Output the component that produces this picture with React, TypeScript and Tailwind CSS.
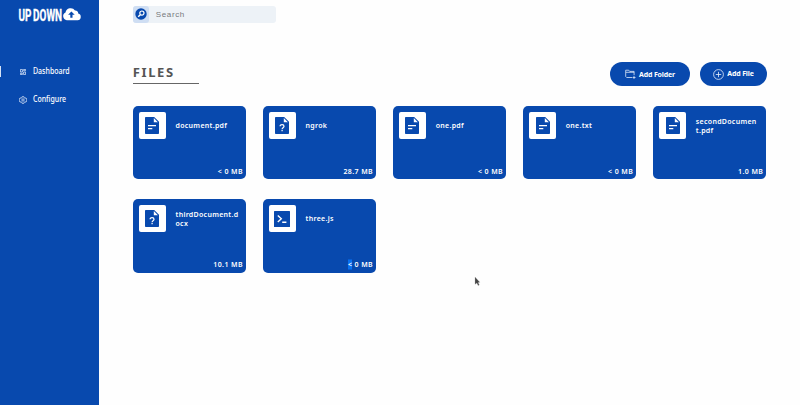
import React from 'react';

type Kind = 'text' | 'unknown' | 'code';
type FileItem = { name: string; size: string; kind: Kind; marked?: boolean };

const files: FileItem[] = [
  { name: 'document.pdf', size: '< 0 MB', kind: 'text' },
  { name: 'ngrok', size: '28.7 MB', kind: 'unknown' },
  { name: 'one.pdf', size: '< 0 MB', kind: 'text' },
  { name: 'one.txt', size: '< 0 MB', kind: 'text' },
  { name: 'secondDocument.pdf', size: '1.0 MB', kind: 'text' },
  { name: 'thirdDocument.docx', size: '10.1 MB', kind: 'unknown' },
  { name: 'three.js', size: '< 0 MB', kind: 'code', marked: true },
];

function Logo() {
  return (
    <svg className="block h-[28px] w-[66px]" viewBox="0 0 66 28">
      <text
        x="1"
        y="20.800"
        transform="scale(0.58 1)"
        textLength="75"
        lengthAdjust="spacingAndGlyphs"
        fill="#fff"
        stroke="#fff"
        strokeWidth="0.350"
        fontSize="16.800"
        wordSpacing="-1.500"
        className="font-['Roboto',sans-serif] font-bold"
      >
        UP DOWN
      </text>
      <path fill="#fff" d="M48.700 20.200a4 4 0 0 1-1.200-7.600A5.200 5.200 0 0 1 57 10.600a2.800 2.800 0 0 1 3.200 3A3.350 3.350 0 0 1 59.600 20.200z" />
      <path fill="#0849ae" d="M53.400 11.400l3.300 3.400h-2.200v3h-2.200v-3h-2.200z" />
    </svg>
  );
}

function FileIcon({ kind }: { kind: Kind }) {
  if (kind === 'code') {
    return (
      <svg className="block h-[16px] w-[16px]" viewBox="0 0 16 16">
        <rect width="16" height="16" rx="0.5" fill="#0849ae" />
        <path d="M3.800 4.500L7.300 7.800 3.800 11M8.200 11.300h4.200" fill="none" stroke="#fff" strokeWidth="1.400" />
      </svg>
    );
  }
  return (
    <svg className="block h-[17px] w-[14px]" viewBox="0 0 14 17">
      <path fill="#0849ae" d="M.8 0h8.400L14 4.800v11.400a.8.800 0 0 1-.8.800H.8a.8.800 0 0 1-.8-.8V.8A.8.800 0 0 1 .8 0z" />
      <path fill="#fff" d="M8.800 1.100l4.100 4.100H8.800z" />
      {kind === 'text' ? (
        <path d="M3 8.700h8M3 11.700h4.300" stroke="#fff" strokeWidth="1.300" />
      ) : (
        <path d="M5.100 9.200c0-2.300 3.900-2.200 3.900 0 0 1.500-1.900 1.500-1.900 3M7.100 13.100v1.200" fill="none" stroke="#fff" strokeWidth="1.250" />
      )}
    </svg>
  );
}

function FileCard({ file }: { file: FileItem }) {
  return (
    <div className="flex h-[73.300px] flex-col justify-between rounded-[5px] bg-[#0849ae] pl-[6px] pr-[3px] pt-[6px] pb-[3.500px] text-white">
      <div className="flex">
        <div className="flex h-[27px] w-[27px] shrink-0 items-center justify-center rounded-[2px] bg-white">
          <FileIcon kind={file.kind} />
        </div>
        <div className="ml-[9.700px] flex h-[28px] w-[65px] items-center">
          <span className="w-full scale-y-[1.12] break-all text-[7px] font-semibold leading-[8.300px] tracking-[0.300px]">{file.name}</span>
        </div>
      </div>
      <div className="scale-y-[1.12] text-right text-[7px] font-semibold leading-[9px] tracking-[0.400px]">
        {file.marked ? (
          <>
            <span className="bg-[#0870f0]">&lt;</span>
            {file.size.slice(1)}
          </>
        ) : (
          file.size
        )}
      </div>
    </div>
  );
}

export default function App() {
  return (
    <div className="relative flex h-[405px] w-[800px] overflow-hidden bg-[#fefefe] font-['Noto_Sans',sans-serif]">
      <aside className="w-[99px] shrink-0 bg-[#0849ae] text-white">
        <div className="pl-[18px]">
          <Logo />
        </div>
        <nav className="pt-[37px] text-[7px] font-medium">
          <a className="flex h-[13px] items-center">
            <span className="h-[11px] w-px bg-[#d5e2f5]" />
            <svg className="ml-[19px] h-[6px] w-[6px]" viewBox="0 0 6 6" fill="none" stroke="#d9e5f7" strokeWidth="0.800">
              <path d="M.4.400h2v2.600h-2zM3.600.400h2v1.300h-2zM.4 4.300h2v1.300h-2zM3.600 3h2v2.600h-2z" />
            </svg>
            <span className="ml-[7px] translate-y-[0.500px] scale-y-[1.15]">Dashboard</span>
          </a>
          <a className="mt-[15px] flex h-[13px] items-center">
            <svg className="ml-[19px] h-[8px] w-[8px]" viewBox="0 0 24 24" fill="none" stroke="#e3ecfa" strokeWidth="2.200">
              <path d="M9.500 2h5l.7 3 2.800 1.600 3-.9 2.400 4.200-2.200 2.100 2.200 2.200-2.400 4.200-3-.9-2.800 1.600-.7 3h-5l-.7-3L6 17.500l-3 .9L.6 14.200 2.800 12 .6 9.900 3 5.700l3 .9L8.800 5z" />
              <circle cx="12" cy="12" r="3.500" />
            </svg>
            <span className="ml-[6px] translate-y-[0.500px] scale-y-[1.15]">Configure</span>
          </a>
        </nav>
      </aside>

      <main className="w-[668px] pl-[33.800px] pt-[6px]">
        <div className="flex h-[16.500px] w-[143px] items-center rounded-[3px] bg-[#edf2f7]">
          <div className="flex h-full w-[16.500px] items-center justify-center rounded-[3px] bg-[#cfdef3]">
            <svg className="h-[12px] w-[12px]" viewBox="0 0 12 12">
              <circle cx="6" cy="6" r="5.700" fill="#0849ae" />
              <circle cx="6.900" cy="5.100" r="2.100" fill="none" stroke="#fff" strokeWidth="1.200" />
              <path d="M5.300 6.700L3.200 8.800" stroke="#fff" strokeWidth="1.400" />
            </svg>
          </div>
          <span className="ml-[6.500px] pt-px font-['Liberation_Sans',sans-serif] text-[8px] tracking-[0.620px] text-[#77797c]">Search</span>
        </div>

        <header className="mt-[39.500px] flex h-[24px] items-start justify-between">
          <h1 className="h-[22px] w-[66.500px] border-b border-[#666] text-[13px] font-bold leading-[21px] tracking-[1.600px] text-[#555]">FILES</h1>
          <div className="flex gap-[10px] text-[7px] font-bold tracking-[-0.150px] text-white">
            <button className="flex h-[24px] w-[80px] items-center justify-center rounded-full bg-[#0849ae]">
              <svg className="mr-[3px] h-[10px] w-[11px]" viewBox="0 0 11 10" fill="none" stroke="#e8f0fb" strokeWidth="0.750">
                <path d="M7 8.500H1.700L.7 7.500V1.200h3l1 1.200h4.400v3.800M.9 3.300h8.200M9 7v3M7.500 8.500h3" />
              </svg>
              <span className="translate-y-[0.500px] scale-y-[1.1]">Add Folder</span>
            </button>
            <button className="flex h-[24px] w-[67px] items-center justify-center rounded-full bg-[#0849ae]">
              <svg className="mr-[3px] h-[11px] w-[11px]" viewBox="0 0 11 11" fill="none" stroke="#e8f0fb" strokeWidth="0.800">
                <circle cx="5.500" cy="5.500" r="4.900" />
                <path d="M5.500 2.800v5.400M2.800 5.500h5.400" />
              </svg>
              <span className="scale-y-[1.1]">Add File</span>
            </button>
          </div>
        </header>

        <section className="mt-[20px] grid grid-cols-[repeat(5,113.200px)] gap-x-[16.900px] gap-y-[20px]">
          {files.map((file) => (
            <FileCard key={file.name} file={file} />
          ))}
        </section>
      </main>

      <svg className="absolute left-[474px] top-[276px] h-[11px] w-[7px]" viewBox="0 0 7 11">
        <path d="M1 1l4.800 5.200-1.700.3 1.200 2.500-1.200.6L2.900 7 1 8.300z" fill="#444" stroke="#aaa" strokeWidth="0.300" />
      </svg>
    </div>
  );
}
